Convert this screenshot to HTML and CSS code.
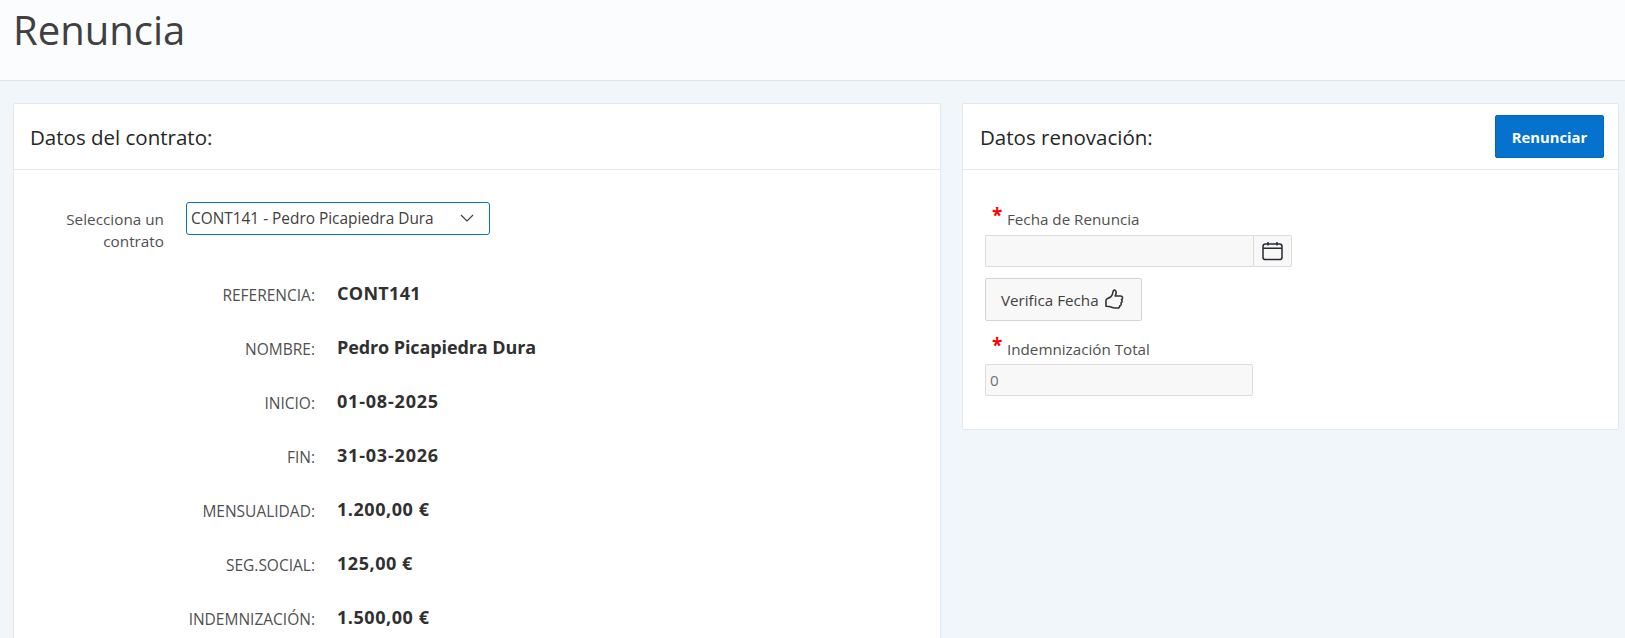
FILE: index.html
```html
<!DOCTYPE html>
<html>
<head>
	<title>Renuncia</title>
	<link rel="stylesheet" href="styles.css">
</head>
<body>
	<header class="page-head">
		<h1>Renuncia</h1>
	</header>

	<main class="page-body">
		<section class="card">
			<div class="card-head">
				<h2>Datos del contrato:</h2>
			</div>
			<div class="card-body contract-body">
				<div class="select-row">
					<label for="contract">Selecciona un contrato</label>
					<div class="select-wrap">
						<select id="contract" name="contract">
							<option>CONT141 - Pedro Picapiedra Dura</option>
						</select>
						<svg class="chevron" width="14" height="8" viewBox="0 0 14 8"><path d="M1 1l6 6 6-6" fill="none" stroke="#404040" stroke-width="1.2"/></svg>
					</div>
				</div>

				<dl class="details">
					<dt>REFERENCIA:</dt><dd class="code">CONT141</dd>
					<dt>NOMBRE:</dt><dd>Pedro Picapiedra Dura</dd>
					<dt>INICIO:</dt><dd class="date">01-08-2025</dd>
					<dt>FIN:</dt><dd class="date">31-03-2026</dd>
					<dt>MENSUALIDAD:</dt><dd class="amount">1.200,00 €</dd>
					<dt>SEG.SOCIAL:</dt><dd class="amount">125,00 €</dd>
					<dt>INDEMNIZACIÓN:</dt><dd class="amount">1.500,00 €</dd>
				</dl>
			</div>
		</section>

		<section class="card card-side">
			<div class="card-head">
				<h2>Datos renovación:</h2>
				<button type="button" class="btn-primary">Renunciar</button>
			</div>
			<div class="card-body side-body">
				<label class="field-label" for="fecha"><span class="req">*</span>Fecha de Renuncia</label>
				<div class="date-group">
					<input type="text" id="fecha" name="fecha" class="field" disabled>
					<button type="button" class="date-btn" aria-label="Calendario">
						<svg width="21" height="20" viewBox="0 0 21 20" fill="none" stroke="#262b33" stroke-width="1.5"><rect x="1" y="3" width="19" height="15.6" rx="2.4"/><path d="M1 7.2h19M6 1v3.4M15 1v3.4"/></svg>
					</button>
				</div>

				<button type="button" class="btn-verify">Verifica Fecha
					<svg width="20" height="21" viewBox="0 0 20 21" fill="none" stroke="#333" stroke-width="1.6" stroke-linejoin="round"><path d="M1 11.500c0-1 .7-1.600 1.600-1.900 2-.7 4.400-2.600 4.900-4.500.4-1.400.3-3.100 1.200-3.800 1.300-.6 2.500.7 2.500 2.300 0 1.300-.6 2.400-1 3.400h5.300c1.300 0 2 1 2 1.900 0 .8-.4 1.400-1 1.800.5.500.7 1 .6 1.700-.1.700-.5 1.200-1.100 1.500.3.600.3 1.300 0 1.900-.3.500-.7.800-1.200 1 .1 1.300-.8 2.200-2.200 2.200H9.500c-1.900 0-3.300-1.200-5.500-1.500L1 17.200z"/></svg>
				</button>

				<label class="field-label label-total" for="total"><span class="req">*</span>Indemnización Total</label>
				<input type="text" id="total" name="total" class="field field-total" value="0" disabled>
			</div>
		</section>
	</main>
</body>
</html>
```

FILE: styles.css
```css
html, body {
	margin: 0;
	height: 100%;
	overflow: hidden;
}
body {
	font-family: "Open Sans", "Noto Sans", sans-serif;
	font-size: 15.2px;
	color: #404040;
	background-color: #f1f6fa;
}
.page-head {
	height: 81px;
	box-sizing: border-box;
	padding: 5px 13px 0;
	background-color: #fbfcfe;
	border-bottom: 1px solid #dfe3e8;
}
h1 {
	margin: 0;
	font-size: 40px;
	line-height: 50px;
	font-weight: 400;
	color: #404040;
}
.page-body {
	display: grid;
	grid-template-columns: 928px 657px;
	column-gap: 21px;
	align-items: start;
	padding: 22px 6px 0 13px;
}
.card {
	background-color: #fff;
	border: 1px solid #e3e6ea;
	border-radius: 2px;
}
.card-head {
	height: 66px;
	box-sizing: border-box;
	display: flex;
	align-items: center;
	justify-content: space-between;
	padding: 0 14px 0 16px;
	border-bottom: 1px solid #e8e8e8;
}
.card-side .card-head {
	padding-left: 17px;
}
h2 {
	margin: 0;
	font-size: 20.5px;
	font-weight: 400;
	color: #262626;
}
.contract-body {
	padding: 32px 0 40px;
}
.select-row {
	display: flex;
	gap: 22px;
}
.select-row label {
	width: 110px;
	margin-left: 40px;
	text-align: right;
	font-size: 15.3px;
	line-height: 22px;
	margin-top: 6px;
	color: #505050;
}
.select-wrap {
	position: relative;
	width: 304px;
	height: 33px;
}
select {
	appearance: none;
	width: 100%;
	height: 100%;
	box-sizing: border-box;
	padding: 0 4px;
	font: inherit;
	font-size: 15.4px;
	color: #404040;
	background-color: #fff;
	border: 1px solid #0572ce;
	border-radius: 3px;
}
.chevron {
	position: absolute;
	right: 16px;
	top: 12px;
}
.details {
	display: grid;
	grid-template-columns: 301px 1fr;
	grid-auto-rows: 54px;
	column-gap: 22px;
	margin: 14px 0 0;
	align-items: center;
}
dt {
	text-align: right;
	font-size: 15.5px;
	padding-top: 4px;
	color: #505050;
}
dd {
	margin: 0;
	font-size: 18px;
	font-weight: 700;
	letter-spacing: -0.1px;
	color: #303030;
}
.code {
	letter-spacing: 0.3px;
}
.date {
	letter-spacing: 0.8px;
}
.amount {
	letter-spacing: 0.55px;
}
.btn-primary {
	width: 109px;
	height: 43px;
	font: inherit;
	font-size: 14.8px;
	font-weight: 700;
	color: #fff;
	background-color: #0572ce;
	border: 1px solid #0566b8;
	border-radius: 2px;
}
.side-body {
	padding: 38px 22px 33px;
}
.field-label {
	display: block;
	line-height: 20px;
	padding-left: 7px;
	color: #505050;
}
.req {
	display: inline-block;
	width: 15px;
	font-size: 19px;
	font-weight: 700;
	line-height: 14px;
	vertical-align: 3px;
	color: #f00;
}
.date-group {
	display: flex;
	width: 307px;
	height: 32px;
	margin-top: 6px;
}
.field {
	box-sizing: border-box;
	width: 268px;
	height: 32px;
	padding: 0 4px;
	font: inherit;
	color: #707070;
	background-color: #f8f8f8;
	border: 1px solid #dcdcdc;
	border-radius: 2px;
}
.date-group .field {
	border-right: none;
	border-radius: 2px 0 0 2px;
}
.date-btn {
	flex: 1;
	display: flex;
	align-items: center;
	justify-content: center;
	padding: 0;
	background-color: #f8f8f8;
	border: 1px solid #dcdcdc;
	border-radius: 0 2px 2px 0;
}
.btn-verify {
	display: flex;
	align-items: center;
	gap: 6px;
	width: 157px;
	height: 43px;
	margin-top: 11px;
	padding: 0 0 0 15px;
	font: inherit;
	color: #404040;
	background-color: #f8f8f8;
	border: 1px solid #d4d4d4;
	border-radius: 2px;
}
.label-total {
	margin-top: 17px;
}
.field-total {
	display: block;
	margin-top: 5px;
}
```
